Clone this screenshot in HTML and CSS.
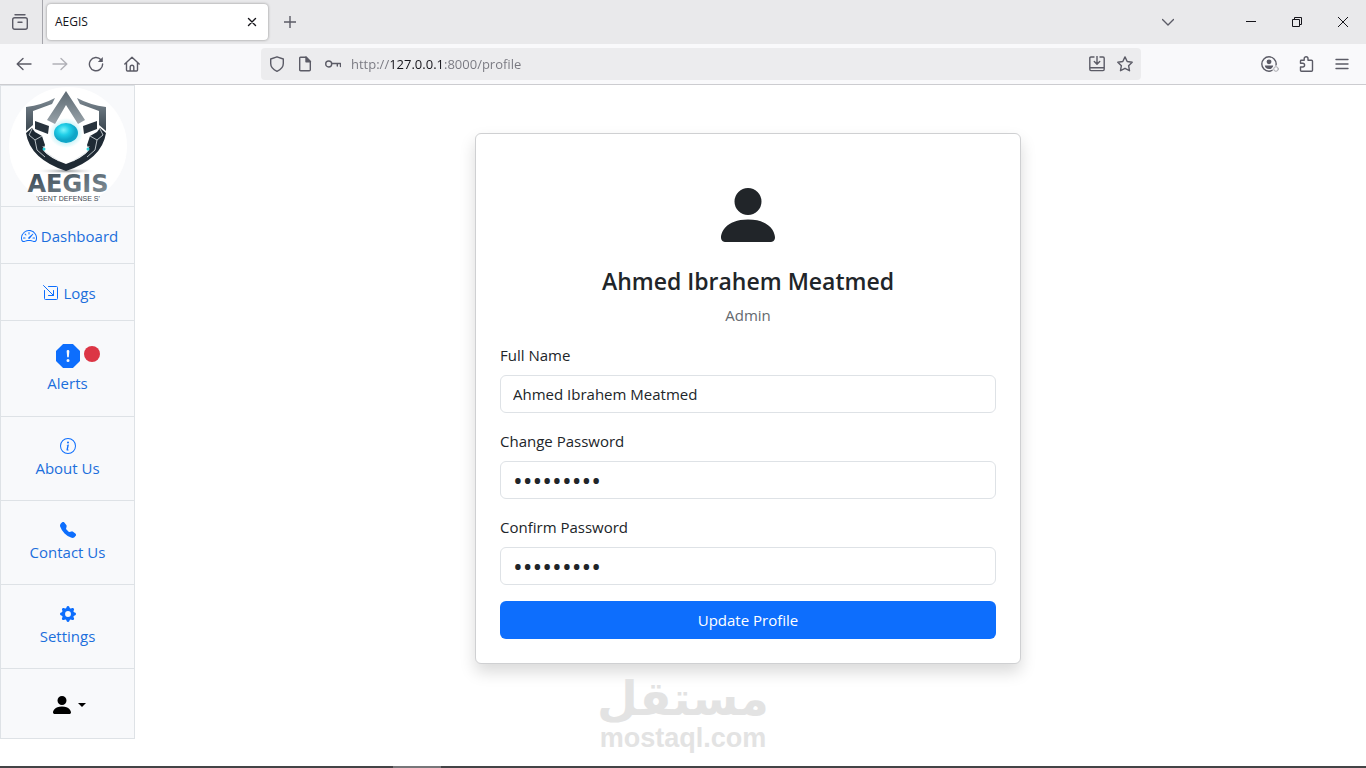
FILE: index.html
```html
<!DOCTYPE html>
<html lang="en">
<head>
  <meta charset="UTF-8" />
  <title>AEGIS</title>
  <link rel="stylesheet" href="styles.css">
</head>
<body>

  <!-- Tab strip -->
  <div class="tab-strip">
    <button class="tool recent" aria-label="Recent browsing">
      <svg width="16" height="16" viewBox="0 0 16 16" class="line"><path d="M3 .8h10"/><rect x=".7" y="3.7" width="14.6" height="11.6" rx="2"/><path d="M6 8.300h4"/></svg>
    </button>
    <div class="tab">
      <span>AEGIS</span>
      <button class="tool tab-close" aria-label="Close tab">
        <svg width="10" height="10" viewBox="0 0 10 10" class="line dark"><path d="M1.500 1.500l7 7M8.500 1.500l-7 7"/></svg>
      </button>
    </div>
    <button class="tool new-tab" aria-label="New tab">
      <svg width="12" height="12" viewBox="0 0 12 12" class="line"><path d="M6 0v12M0 6h12"/></svg>
    </button>
    <div class="window-buttons">
      <button class="tool" aria-label="List all tabs">
        <svg width="12" height="12" viewBox="0 0 12 12" class="line"><path d="M.5 3.500L6 9l5.500-5.500"/></svg>
      </button>
      <button class="tool minimize" aria-label="Minimize">
        <svg width="10" height="10" viewBox="0 0 10 10" class="line dark thin"><path d="M0 4.500h10"/></svg>
      </button>
      <button class="tool" aria-label="Restore">
        <svg width="10" height="10" viewBox="0 0 10 10" class="line dark thin"><path d="M.5 2.500h7v7h-7zM2.500 2.500v-2h7v7h-2"/></svg>
      </button>
      <button class="tool" aria-label="Close">
        <svg width="10" height="10" viewBox="0 0 10 10" class="line dark thin"><path d="M0 0l10 10M10 0L0 10"/></svg>
      </button>
    </div>
  </div>

  <!-- Toolbar -->
  <div class="toolbar">
    <div class="nav-buttons">
      <button class="tool" aria-label="Back">
        <svg width="16" height="16" viewBox="0 0 16 16" class="line"><path d="M15 8H1.500M7 2.500L1.200 8 7 13.500"/></svg>
      </button>
      <button class="tool" aria-label="Forward" disabled>
        <svg width="16" height="16" viewBox="0 0 16 16" class="line"><path d="M1 8h13.500M9 2.500L14.800 8 9 13.500"/></svg>
      </button>
      <button class="tool" aria-label="Reload">
        <svg width="16" height="16" viewBox="0 0 16 16" class="line"><path d="M13 3.800A6.600 6.600 0 1 0 14.600 8"/><path d="M14.800 1v5h-5z" fill="currentColor" stroke="none"/></svg>
      </button>
      <button class="tool" aria-label="Home">
        <svg width="16" height="16" viewBox="0 0 16 16" class="line"><path d="M.8 8L8 1.200 15.200 8M2.500 6.500V14q0 1 1 1h9q1 0 1-1V6.500M6.200 15v-4q0-1.800 1.800-1.800T9.800 11v4"/></svg>
      </button>
    </div>
    <div class="url-bar">
      <svg width="16" height="16" viewBox="0 0 16 16" class="line"><path d="M8 .8L14.300 3v4.500q0 5-6.300 7.800-6.300-2.800-6.300-7.800V3z"/></svg>
      <svg width="16" height="16" viewBox="0 0 16 16" class="line"><path d="M3.500 1.200H9l4.300 4.300v8.300q0 1-1 1h-8.600q-1 0-1-1V2.200q0-1 .8-1z"/><path d="M9 1l4.500 4.700H9z" fill="currentColor"/></svg>
      <svg width="16" height="16" viewBox="0 0 16 16" class="line"><circle cx="3.700" cy="8" r="3"/><path d="M6.700 7.500h8.800v3M12.300 7.500v2.500"/></svg>
      <input class="url-input" type="text" aria-label="Address" value="http://127.0.0.1:8000/profile">
      <svg width="16" height="16" viewBox="0 0 16 16" class="line"><path d="M5 1H2Q.8 1 .8 2.200v11Q.8 14.600 2 14.600h12q1.200 0 1.200-1.400v-11Q15.200 1 14 1h-3M.8 11.700h14.400M8 .3v7.500M5.300 5.500L8 8.200l2.700-2.700"/></svg>
      <svg width="16" height="16" viewBox="0 0 16 16" class="line"><path d="M8 .9l2.200 4.600 5 .7-3.600 3.500.9 5L8 12.300l-4.500 2.400.9-5L.8 6.200l5-.7z"/></svg>
    </div>
    <div class="menu-buttons">
      <button class="tool" aria-label="Account">
        <svg width="18" height="16" viewBox="0 0 18 16" class="line"><circle cx="8" cy="8" r="7.200"/><circle cx="8" cy="5.800" r="2.400" fill="currentColor" stroke="none"/><path d="M3.800 9.600h8.400q-.3 3.400-4.200 3.400T3.800 9.600z" fill="currentColor" stroke="none"/><circle cx="15" cy="13" r="3.600" fill="#f9f9fb" stroke="none"/><circle cx="15" cy="13" r="2.300" stroke="#a8a8ae" stroke-width="1"/></svg>
      </button>
      <button class="tool" aria-label="Extensions">
        <svg width="16" height="16" viewBox="0 0 16 16" class="line"><path d="M1.500 14.200V11h2.200a1.900 1.900 0 0 0 0-3.800H1.500V5q0-.7.700-.7h3V2.600a1.900 1.900 0 0 1 3.800 0v1.700h3.500q1 0 1 1v9q0 1-1 1H2.500q-1 0-1-1z"/></svg>
      </button>
      <button class="tool" aria-label="Open application menu">
        <svg width="14" height="14" viewBox="0 0 14 14" class="line"><path d="M1 2.500h12M1 7h12M1 11.500h12"/></svg>
      </button>
    </div>
  </div>

  <div class="page">
    <!-- Sidebar -->
    <nav class="sidebar">
      <a href="#" class="item logo" aria-label="AEGIS">
        <svg width="120" height="120" viewBox="0 0 120 120">
          <defs>
            <linearGradient id="steel" x1="0" y1="0" x2="0" y2="1">
              <stop offset="0" stop-color="#7c8891"/><stop offset="1" stop-color="#3a464f"/>
            </linearGradient>
            <linearGradient id="peak" x1="0" y1="0" x2="0" y2="1">
              <stop offset="0" stop-color="#5d6a73"/><stop offset="1" stop-color="#98a2a9"/>
            </linearGradient>
            <linearGradient id="word" x1="0" y1="0" x2="1" y2="1">
              <stop offset="0" stop-color="#33434f"/><stop offset="1" stop-color="#8a979f"/>
            </linearGradient>
            <radialGradient id="gem" cx=".4" cy=".35">
              <stop offset="0" stop-color="#7df3fb"/><stop offset=".5" stop-color="#20cfe8"/><stop offset="1" stop-color="#0fa6c8"/>
            </radialGradient>
            <radialGradient id="glow">
              <stop offset=".5" stop-color="#b9eff6"/><stop offset="1" stop-color="#ffffff"/>
            </radialGradient>
            <radialGradient id="shade">
              <stop offset="0" stop-color="#8b9094"/><stop offset="1" stop-color="#ffffff" stop-opacity="0"/>
            </radialGradient>
            <!-- one half of the shield, mirrored for the other -->
            <g id="half">
              <path d="M47 12L44 18 25 25v14l-7 6V21q16-2 29-9z" fill="url(#steel)"/>
              <path d="M27 35l14 5-1 8-13-5z" fill="#28333d"/>
              <path d="M18 47l6-5 3 4 7 4 3 9-2 5q6 8 23 14v7Q22 73 18 47z" fill="#1f2a34"/>
              <path d="M24 43l-3 6 6 5 2 10 8 7M27 54l7-4M35 60l2 6 14 9" fill="none" stroke="#dde3e7" stroke-width=".8"/>
              <circle cx="36" cy="63" r="1.500" fill="#2ad2dc"/>
            </g>
          </defs>
          <circle cx="60" cy="60" r="59" fill="#fff"/>
          <ellipse cx="58" cy="85" rx="32" ry="3" fill="url(#shade)"/>
          <use href="#half"/>
          <use href="#half" transform="translate(116 0) scale(-1 1)"/>
          <ellipse cx="58" cy="47" rx="17" ry="15" fill="url(#glow)"/>
          <path d="M58 5l19 29-7 4-12-19-11 19-8-4z" fill="url(#peak)"/>
          <ellipse cx="58" cy="47" rx="12" ry="10" fill="url(#gem)"/>
          <text x="60" y="106" text-anchor="middle" class="logo-name" fill="url(#word)">AEGIS</text>
          <text x="60" y="115" text-anchor="middle" class="logo-tag">'GENT DEFENSE S'</text>
        </svg>
      </a>
      <a href="#" class="item row">
        <svg width="16" height="16" viewBox="0 0 16 16" fill="currentColor"><path d="M8 4a.5.5 0 0 1 .5.5V6a.5.5 0 0 1-1 0V4.500A.5.5 0 0 1 8 4M3.732 5.732a.5.5 0 0 1 .707 0l.915.914a.5.5 0 1 1-.708.708l-.914-.915a.5.5 0 0 1 0-.707M2 10a.5.5 0 0 1 .5-.5h1.586a.5.5 0 0 1 0 1H2.500A.5.5 0 0 1 2 10m9.500 0a.5.5 0 0 1 .5-.5h1.500a.5.5 0 0 1 0 1H12a.5.5 0 0 1-.5-.5m.754-4.246a.39.39 0 0 0-.527-.020L7.547 9.310a.91.91 0 1 0 1.302 1.258l3.434-4.297a.39.39 0 0 0-.029-.518z"/><path fill-rule="evenodd" d="M0 10a8 8 0 1 1 15.547 2.661c-.442 1.253-1.845 1.602-2.932 1.250C11.309 13.488 9.475 13 8 13c-1.474 0-3.310.488-4.615.911-1.087.352-2.490.003-2.932-1.250A8 8 0 0 1 0 10m8-7a7 7 0 0 0-6.603 9.329c.203.575.923.876 1.680.630C4.397 12.533 6.358 12 8 12s3.604.532 4.923.960c.757.245 1.477-.056 1.680-.631A7 7 0 0 0 8 3"/></svg>
        <span>Dashboard</span>
      </a>
      <a href="#" class="item row">
        <svg width="16" height="16" viewBox="0 0 16 16" fill="none" stroke="currentColor" stroke-linecap="round"><path d="M5.500 1.500H13.500q1 0 1 1v11q0 1-1 1h-11q-1 0-1-1v-8M.5.5l10 10M5.500 10.500h5v-5"/></svg>
        <span>Logs</span>
      </a>
      <a href="#" class="item stack alerts">
        <span class="alert-icon">
          <svg width="24" height="24" viewBox="0 0 16 16" fill="currentColor"><path d="M11.460.146A.5.5 0 0 0 11.107 0H4.893a.5.5 0 0 0-.353.146L.146 4.540A.5.5 0 0 0 0 4.893v6.214a.5.5 0 0 0 .146.353l4.394 4.394a.5.5 0 0 0 .353.146h6.214a.5.5 0 0 0 .353-.146l4.394-4.394a.5.5 0 0 0 .146-.353V4.893a.5.5 0 0 0-.146-.353zM8 4c.535 0 .954.462.900.995l-.350 3.507a.552.552 0 0 1-1.100 0L7.100 4.995A.905.905 0 0 1 8 4m.002 6a1 1 0 1 1 0 2 1 1 0 0 1 0-2"/></svg>
          <span class="badge"></span>
        </span>
        <span>Alerts</span>
      </a>
      <a href="#" class="item stack">
        <svg width="16" height="16" viewBox="0 0 16 16" fill="currentColor"><path d="M8 15A7 7 0 1 1 8 1a7 7 0 0 1 0 14m0 1A8 8 0 1 0 8 0a8 8 0 0 0 0 16"/><path d="m8.930 6.588-2.290.287-.082.380.450.083c.294.070.352.176.288.469l-.738 3.468c-.194.897.105 1.319.808 1.319.545 0 1.178-.252 1.465-.598l.088-.416c-.200.176-.492.246-.686.246-.275 0-.375-.193-.304-.533zM9 4.500a1 1 0 1 1-2 0 1 1 0 0 1 2 0"/></svg>
        <span>About Us</span>
      </a>
      <a href="#" class="item stack">
        <svg width="16" height="16" viewBox="0 0 16 16" fill="currentColor"><path fill-rule="evenodd" d="M1.885.511a1.745 1.745 0 0 1 2.610.163L6.290 2.980c.329.423.445.974.315 1.494l-.547 2.190a.68.68 0 0 0 .178.643l2.457 2.457a.68.68 0 0 0 .644.178l2.189-.547a1.750 1.750 0 0 1 1.494.315l2.306 1.794c.829.645.905 1.870.163 2.611l-1.034 1.034c-.740.740-1.846 1.065-2.877.702a18.600 18.600 0 0 1-7.010-4.420 18.600 18.600 0 0 1-4.420-7.009c-.362-1.030-.037-2.137.703-2.877z"/></svg>
        <span>Contact Us</span>
      </a>
      <a href="#" class="item stack">
        <svg width="16" height="16" viewBox="0 0 16 16" fill="currentColor"><path d="M9.405 1.050c-.413-1.400-2.397-1.400-2.810 0l-.100.340a1.464 1.464 0 0 1-2.105.872l-.310-.170c-1.283-.698-2.686.705-1.987 1.987l.169.311c.446.820.023 1.841-.872 2.105l-.340.100c-1.400.413-1.400 2.397 0 2.810l.340.100a1.464 1.464 0 0 1 .872 2.105l-.170.310c-.698 1.283.705 2.686 1.987 1.987l.311-.169a1.464 1.464 0 0 1 2.105.872l.100.340c.413 1.400 2.397 1.400 2.810 0l.100-.340a1.464 1.464 0 0 1 2.105-.872l.310.170c1.283.698 2.686-.705 1.987-1.987l-.169-.311a1.464 1.464 0 0 1 .872-2.105l.340-.100c1.400-.413 1.400-2.397 0-2.810l-.340-.100a1.464 1.464 0 0 1-.872-2.105l.170-.310c.698-1.283-.705-2.686-1.987-1.987l-.311.169a1.464 1.464 0 0 1-2.105-.872zM8 10.930a2.929 2.929 0 1 1 0-5.860 2.929 2.929 0 0 1 0 5.858z"/></svg>
        <span>Settings</span>
      </a>
      <button class="item user-menu" aria-label="Account menu">
        <svg width="24" height="24" viewBox="0 0 16 16" fill="currentColor"><path d="M3 14s-1 0-1-1 1-4 6-4 6 3 6 4-1 1-1 1zm5-6a3 3 0 1 0 0-6 3 3 0 0 0 0 6"/></svg>
        <span class="caret"></span>
      </button>
    </nav>

    <!-- Profile -->
    <main class="content">
      <form class="card">
        <div class="profile">
          <svg width="72" height="72" viewBox="0 0 16 16" fill="currentColor"><path d="M3 14s-1 0-1-1 1-4 6-4 6 3 6 4-1 1-1 1zm5-6a3 3 0 1 0 0-6 3 3 0 0 0 0 6"/></svg>
          <h1>Ahmed Ibrahem Meatmed</h1>
          <p>Admin</p>
        </div>
        <label for="fullName">Full Name</label>
        <input class="field" type="text" id="fullName" value="Ahmed Ibrahem Meatmed">
        <label for="password">Change Password</label>
        <input class="field password" type="password" id="password" value="123456789">
        <label for="confirmPassword">Confirm Password</label>
        <input class="field password" type="password" id="confirmPassword" value="123456789">
        <button class="submit" type="submit">Update Profile</button>
      </form>
    </main>
  </div>

  <div class="watermark">
    <span class="watermark-ar" lang="ar" dir="rtl">مستقل</span>
    <span class="watermark-en">mostaql.com</span>
  </div>

  <div class="taskbar"><div class="taskbar-active"></div></div>

</body>
</html>
```
FILE: styles.css
```css
* {
  box-sizing: border-box;
}

body {
  margin: 0;
  min-height: 100vh;
  display: flex;
  flex-direction: column;
  position: relative;
  background: #fff;
  color: #212529;
  font-family: "Open Sans", "Noto Sans", sans-serif;
  font-size: 15px;
  line-height: 24px;
}

button, input {
  font: inherit;
  color: inherit;
}

svg {
  display: block;
  flex-shrink: 0;
}

.line {
  fill: none;
  stroke: currentColor;
  stroke-width: 1.4;
  stroke-linecap: round;
  stroke-linejoin: round;
}

.dark {
  color: #15141a;
}

.thin {
  stroke-width: 1;
  stroke-linecap: butt;
  stroke-linejoin: miter;
}

.tool {
  display: flex;
  align-items: center;
  justify-content: center;
  padding: 0;
  border: none;
  background: none;
  color: #5b5b66;
}

.tool:disabled {
  opacity: 0.45;
}

/* browser tab strip */
.tab-strip {
  display: flex;
  align-items: center;
  height: 44px;
  background: #e9e9eb;
}

.recent {
  width: 43px;
  height: 44px;
  padding-right: 3px;
  border-right: 1px solid #a5a5ab;
}

.tab {
  display: flex;
  align-items: center;
  justify-content: space-between;
  width: 221px;
  height: 36px;
  margin-left: 4px;
  padding: 0 11px 0 8px;
  border-radius: 4px;
  background: #fff;
  box-shadow: 0 0 3px rgba(0, 0, 0, 0.4);
  color: #15141a;
  font-size: 12px;
}

.new-tab {
  margin-left: 16px;
}

.window-buttons {
  display: flex;
  gap: 36px;
  margin-left: auto;
  padding-right: 18px;
}

.minimize {
  margin-left: 36px;
}

/* browser toolbar */
.toolbar {
  display: flex;
  align-items: center;
  height: 41px;
  padding: 0 17px 0 16px;
  background: #f9f9fb;
  border-bottom: 1px solid #ccccd0;
}

.nav-buttons, .menu-buttons {
  display: flex;
  align-items: center;
  gap: 20px;
}

.url-bar {
  flex: 1;
  display: flex;
  align-items: center;
  gap: 12px;
  height: 32px;
  margin: 0 120px 0 121px;
  padding: 0 8px;
  border-radius: 4px;
  background: #ececee;
  color: #5b5b66;
}

/* the host part of the address is darker than the rest */
.url-input {
  flex: 1;
  min-width: 0;
  height: 24px;
  margin-left: -2px;
  padding: 0;
  border: none;
  outline: none;
  font-size: 13px;
  background: linear-gradient(to right, #77777f 40px, #15141a 40px, #15141a 94px, #77777f 94px);
  background-clip: text;
  -webkit-background-clip: text;
  -webkit-text-fill-color: transparent;
}

/* page */
.page {
  flex: 1;
  display: flex;
  align-items: flex-start;
}

.sidebar {
  display: flex;
  flex-direction: column;
  width: 135px;
  border: 1px solid #dee2e6;
  background: #f8f9fb;
}

.item {
  display: flex;
  align-items: center;
  justify-content: center;
  border: none;
  border-bottom: 1px solid #dee2e6;
  color: #0d6efd;
  text-decoration: none;
}

.item > span {
  color: #1c6fdc;
}

.item:last-child {
  border-bottom: none;
}

.logo-name {
  font: bold 24px "DejaVu Sans", sans-serif;
}

.logo-tag {
  font: 7px "Liberation Sans", sans-serif;
  fill: #3c4650;
}

.row {
  gap: 4px;
  padding: 17px 0 15px 4px;
}

.stack {
  flex-direction: column;
  gap: 2px;
  padding: 21px 0 20px;
}

.alerts {
  gap: 3px;
  padding: 23px 0 21px;
}

.alert-icon {
  position: relative;
}

.alerts .alert-icon {
  color: #0d6efd;
}

.badge {
  position: absolute;
  top: 2px;
  left: 28px;
  width: 16px;
  height: 16px;
  border-radius: 50%;
  background: #dc3545;
}

.user-menu {
  gap: 4px;
  padding: 24px 0 21px;
  background: none;
  color: #000;
}

.caret {
  border: 4px solid transparent;
  border-top-color: #000;
  border-bottom: none;
}

.content {
  flex: 1;
  padding: 48px 5px 48px 0;
}

.card {
  display: flex;
  flex-direction: column;
  max-width: 546px;
  margin: 0 auto;
  padding: 24px;
  border: 1px solid #cfd0d2;
  border-radius: 6px;
  background: #fff;
  box-shadow: 0 8px 16px rgba(0, 0, 0, 0.15);
}

.profile {
  display: flex;
  flex-direction: column;
  align-items: center;
  padding: 21px 0 16px;
}

.profile h1 {
  margin: 16px 0 7px;
  font-size: 23px;
  font-weight: 600;
  line-height: 29px;
}

.profile p {
  margin: 0;
  color: #64696e;
}

label {
  margin-bottom: 8px;
}

.field {
  height: 38px;
  margin-bottom: 16px;
  padding: 0 12px;
  border: 1px solid #dee2e6;
  border-radius: 6px;
  background: #fff;
}

/* larger type gives larger dots */
.password {
  font-size: 26px;
}

.submit {
  height: 38px;
  border: none;
  border-radius: 6px;
  background: #0d6efd;
  color: #fff;
}

/* watermark over the bottom of the page */
.watermark {
  position: absolute;
  left: 50%;
  bottom: 16px;
  transform: translateX(-50%);
  display: flex;
  flex-direction: column;
  align-items: center;
  color: #e3e3e3;
  font-weight: bold;
}

.watermark-ar {
  font-family: "DejaVu Sans", sans-serif;
  font-size: 47px;
  line-height: 50px;
}

.watermark-en {
  font-family: "Liberation Sans", sans-serif;
  font-size: 27px;
  line-height: 28px;
}

.taskbar {
  height: 2px;
  background: #444446;
}

.taskbar-active {
  width: 48px;
  height: 2px;
  margin-left: 393px;
  background: #77777a;
}
```
